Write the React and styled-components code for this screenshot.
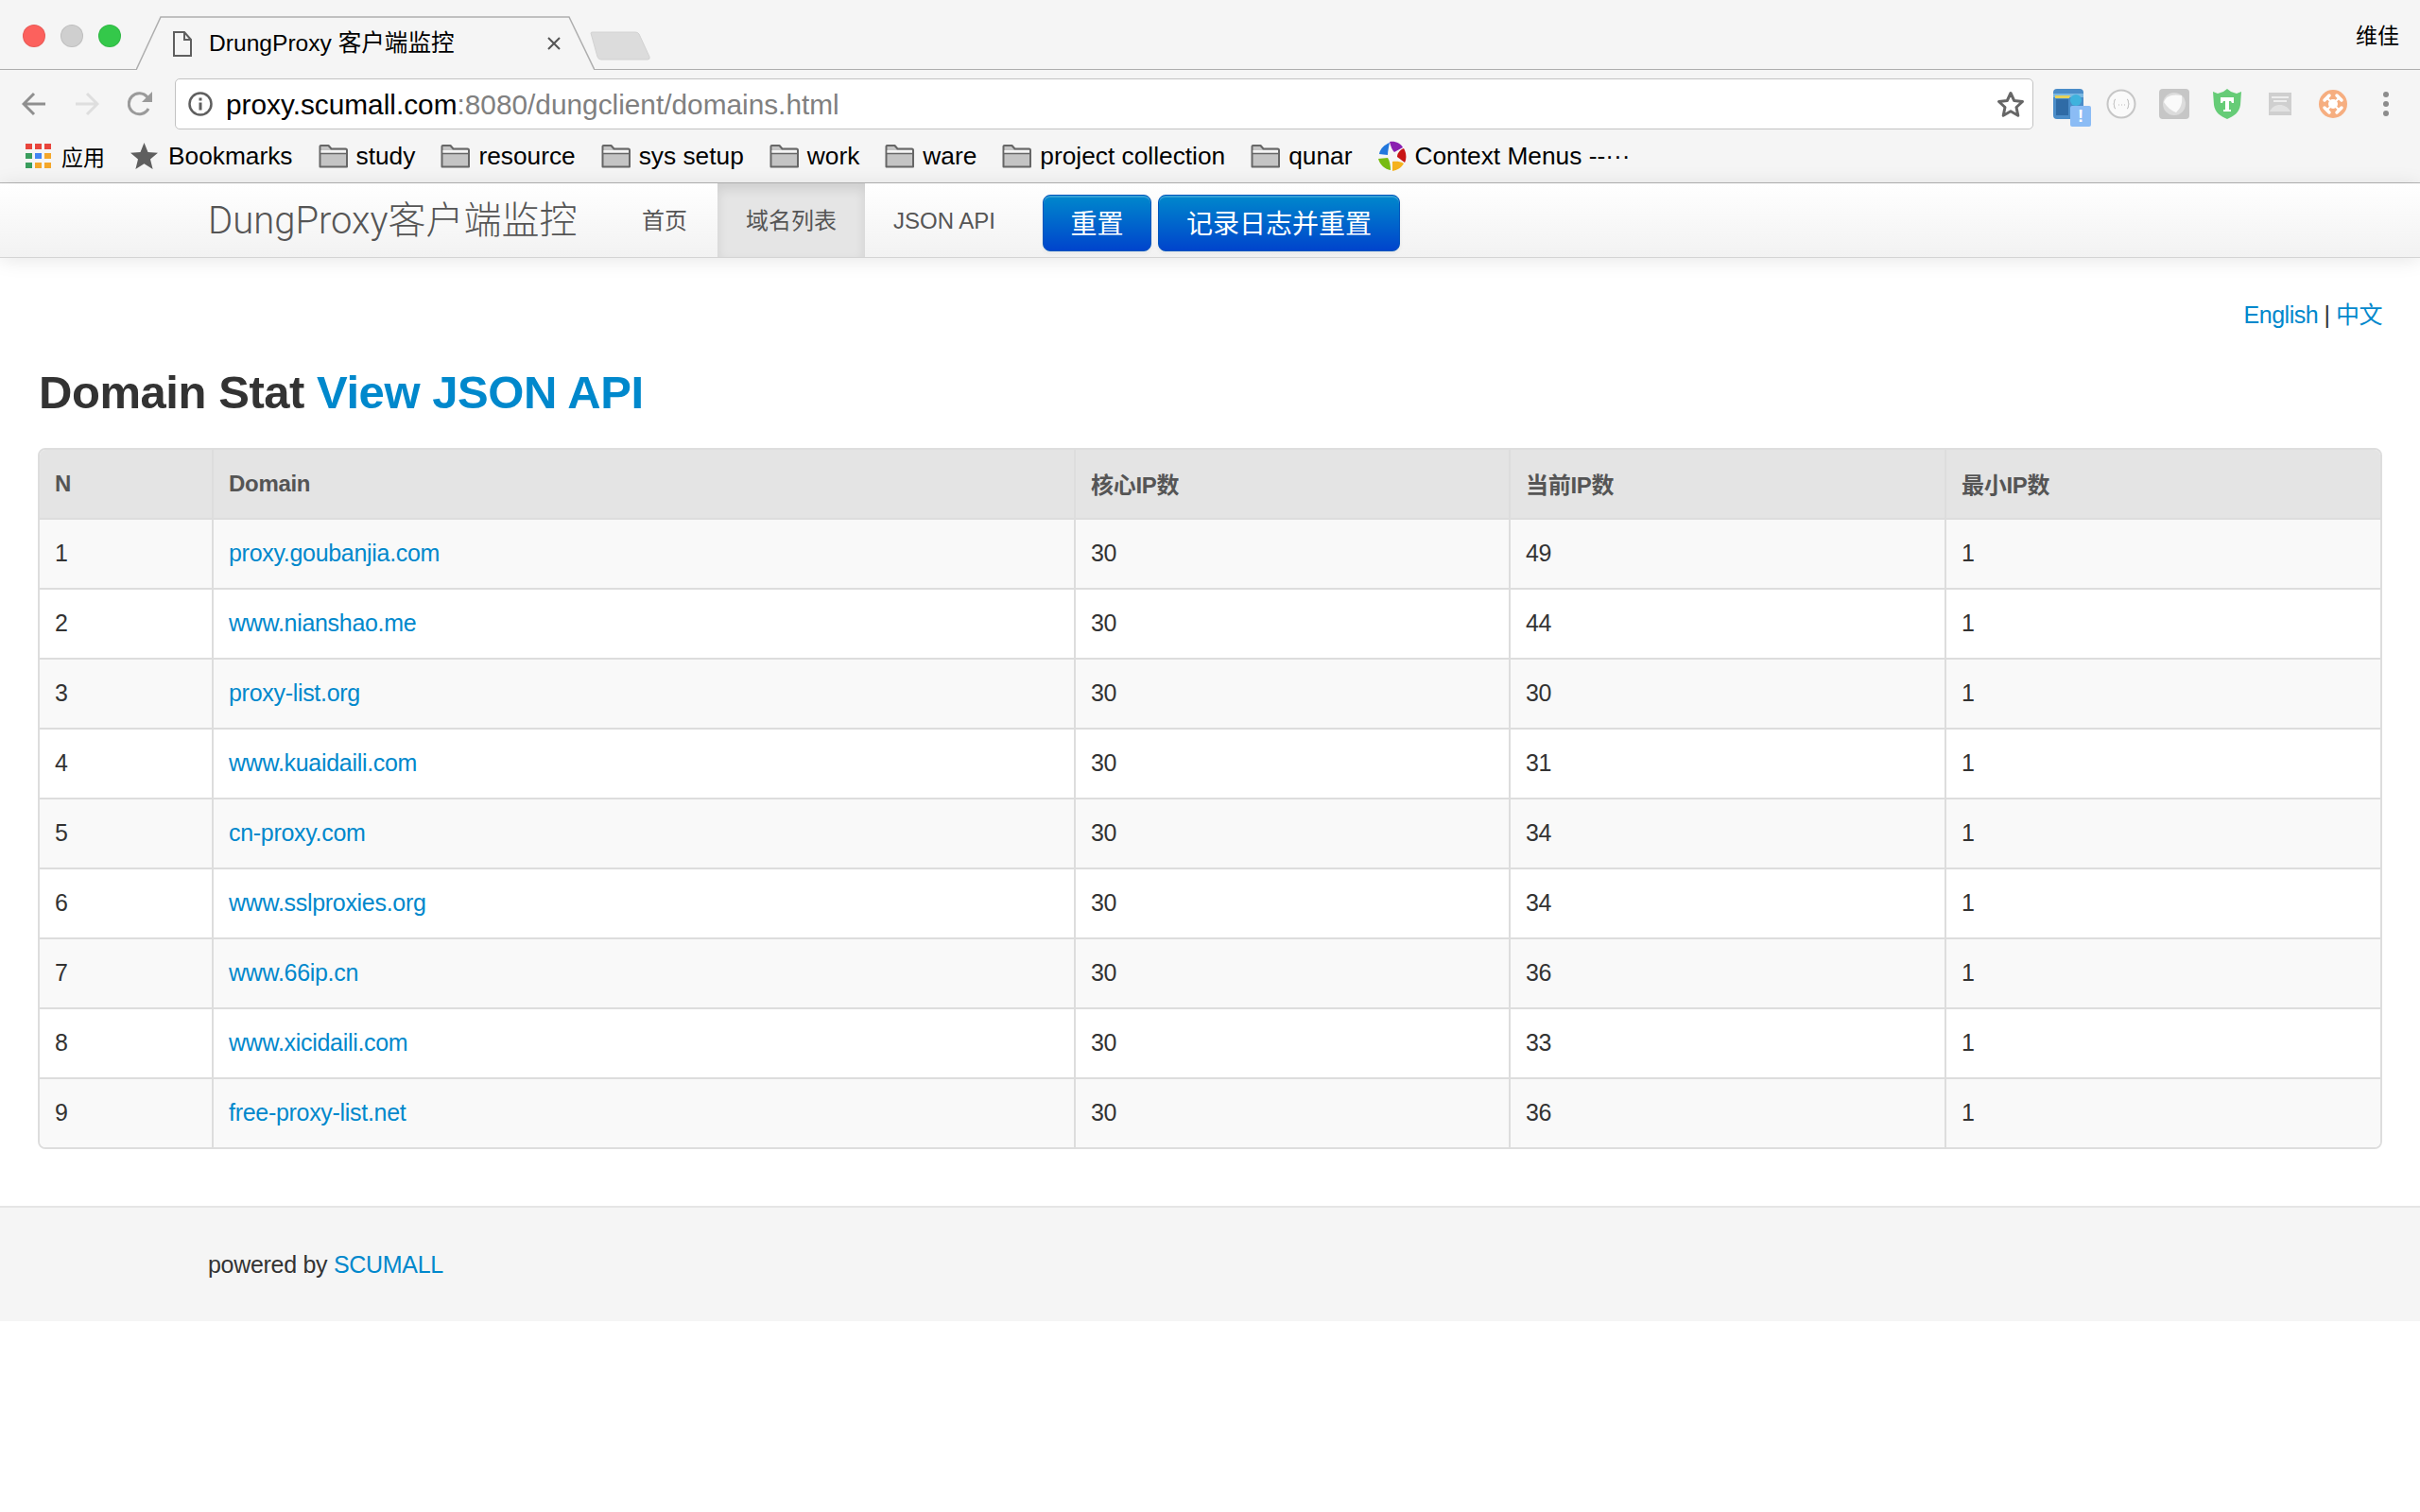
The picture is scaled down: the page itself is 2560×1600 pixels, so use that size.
import styled, { createGlobalStyle } from 'styled-components'

const SANS = `"Liberation Sans", "Noto Sans CJK SC", sans-serif`
const BLUE = '#0088cc'

const GlobalStyle = createGlobalStyle`
  html, body {
    margin: 0;
    background: #fff;
    font-family: ${SANS};
    color: #333;
  }
  * { box-sizing: border-box; }
  a { color: ${BLUE}; text-decoration: none; }
`

const TitleBar = styled.div`
  height: 74px;
  display: flex;
  background: #f5f5f5;
  border-bottom: 1px solid #aeaeae;
  padding-left: 24px;
`

const Lights = styled.div`
  display: flex;
  gap: 16px;
  margin-top: 26px;
`

const Light = styled.span`
  width: 24px;
  height: 24px;
  border-radius: 50%;
  background: ${({ color }) => color};
  border: 1px solid rgba(0, 0, 0, 0.08);
`

const Tab = styled.div`
  position: relative;
  width: 485px;
  height: 57px;
  margin: 17px 0 -1px 16px;
  padding: 16px 36px 0 39px;
  display: flex;
  align-items: flex-start;
`

const TabShape = styled.svg`
  position: absolute;
  left: 0;
  top: 0;
`

const TabTitle = styled.span`
  position: relative;
  margin: -2px 0 0 18px;
  font-size: 24.6px;
  line-height: 30px;
  color: #000;
  flex: 1;
`

const TabClose = styled.svg`
  position: relative;
  margin-top: 6px;
`

const NewTab = styled.svg`
  margin: 33px 0 0 -7px;
`

const Profile = styled.div`
  margin-left: auto;
  padding: 22px 22px 0 0;
  font-size: 23px;
  line-height: 32px;
  color: #000;
`

const Toolbar = styled.div`
  height: 63px;
  padding: 9px 8px 0 23px;
  display: flex;
  align-items: flex-start;
  background: #f5f5f5;
`

const NavIcon = styled.svg`
  margin: 14px 30px 0 0;
  flex: none;
`

const Omnibox = styled.div`
  width: 1966px;
  height: 54px;
  margin-left: -7px;
  padding: 0 8px 0 13px;
  display: flex;
  align-items: center;
  gap: 14px;
  background: #fff;
  border: 1px solid #c2c2c2;
  border-radius: 5px;
`

const Url = styled.div`
  flex: 1;
  padding-top: 2px;
  font-size: 29.8px;
  color: #000;
  span { color: #808080; }
`

const Extensions = styled.div`
  display: flex;
  margin-left: 9px;
  height: 54px;
  align-items: center;
`

const ExtSlot = styled.div`
  position: relative;
  width: 56px;
  display: flex;
  justify-content: center;
  align-items: center;
`

const ExtBadge = styled.span`
  position: absolute;
  left: 30px;
  top: 18px;
  width: 22px;
  height: 22px;
  border-radius: 2px;
  background: #8bbcf5;
  color: #fff;
  font-size: 18px;
  font-weight: bold;
  line-height: 22px;
  text-align: center;
`

const BookmarksBar = styled.div`
  height: 57px;
  padding-left: 27px;
  display: flex;
  align-items: center;
  gap: 27px;
  background: #f5f5f5;
  border-bottom: 1px solid #b4b4b4;
`

const Bookmark = styled.div`
  display: flex;
  align-items: center;
  gap: ${({ gap }) => gap || 9}px;
  font-size: ${({ size }) => size || 26.3}px;
  color: #000;
  white-space: nowrap;
`

const Navbar = styled.nav`
  position: relative;
  height: 79px;
  padding-left: 220px;
  display: flex;
  background: linear-gradient(#ffffff, #f2f2f2);
  border-bottom: 1px solid #d4d4d4;
  box-shadow: 0 2px 20px rgba(0, 0, 0, 0.1);
`

const Brand = styled.a`
  width: 387px;
  margin-right: 42px;
  font-family: Roboto, "Noto Sans CJK SC", sans-serif;
  font-weight: 300;
  font-size: 40px;
  line-height: 80px;
  color: #555;
  white-space: nowrap;
`

const NavItem = styled.a`
  margin-left: ${({ active }) => (active ? '2px' : '0')};
  padding: 0 30px;
  font-size: 24px;
  line-height: 79px;
  color: #555;
  background: ${({ active }) => (active ? '#e5e5e5' : 'transparent')};
  box-shadow: ${({ active }) => (active ? 'inset 0 6px 12px rgba(0, 0, 0, 0.1)' : 'none')};
`

const ResetButton = styled.button`
  width: ${({ wide }) => (wide ? '256px' : '115px')};
  height: 60px;
  margin: 12px 0 0 ${({ wide }) => (wide ? '7px' : '20px')};
  padding: 0 0 2px;
  font-family: ${SANS};
  font-size: 28px;
  color: #fff;
  background: linear-gradient(#0088cc, #0044cc);
  border: 1px solid #0055bb;
  border-radius: 8px;
  box-shadow: inset 0 2px 0 rgba(255, 255, 255, 0.2), 0 2px 4px rgba(0, 0, 0, 0.05);
`

const Main = styled.main`
  padding: 40px 40px 60px;
`

const LangSwitch = styled.div`
  text-align: right;
  font-size: 25px;
  letter-spacing: -0.5px;
  line-height: 40px;
`

const Heading = styled.h2`
  margin: 32px 0 29px 1px;
  font-size: 49px;
  letter-spacing: -0.45px;
  line-height: 60px;
  font-weight: bold;
  color: #333;
`

const Table = styled.table`
  width: 2480px;
  table-layout: fixed;
  border-collapse: separate;
  border-spacing: 0;
  border: 2px solid #ddd;
  border-radius: 8px;
  font-size: 25px;
  letter-spacing: -0.3px;
  overflow: hidden;
`

const Th = styled.th`
  height: 72px;
  padding: 0 16px 1px;
  text-align: left;
  font-size: 24px;
  font-weight: bold;
  color: #555;
  background: #e4e4e4;
  border-left: ${({ first }) => (first ? 'none' : '2px solid #ddd')};
`

const Row = styled.tr`
  background: ${({ odd }) => (odd ? '#f9f9f9' : '#fff')};
`

const Td = styled.td`
  height: 74px;
  padding: 0 16px 2px;
  color: #333;
  border-top: 2px solid #ddd;
  border-left: ${({ first }) => (first ? 'none' : '2px solid #ddd')};
`

const Footer = styled.footer`
  height: 122px;
  padding-left: 220px;
  font-size: 25px;
  letter-spacing: -0.3px;
  line-height: 120px;
  color: #333;
  background: #f5f5f5;
  border-top: 2px solid #e5e5e5;
`

const DocIcon = () => (
  <svg width="20" height="27" viewBox="0 0 20 27" style={{ position: 'relative', flex: 'none' }}>
    <path d="M1 1h11l7 8v17H1z" fill="none" stroke="#5f5f5f" strokeWidth="2" />
    <path d="M12 1v8h7" fill="none" stroke="#5f5f5f" strokeWidth="2" />
  </svg>
)

const FolderIcon = () => (
  <svg width="31" height="25" viewBox="0 0 31 25">
    <path d="M1.5 23.5V2a1 1 0 0 1 1-1h8l3 3.5h15a1.5 1.5 0 0 1 1.5 1.5v17.500z" fill="#c4c4c4" stroke="#666" strokeWidth="2" strokeLinejoin="round" />
    <path d="M2.500 6h26.500v3H2.500z" fill="#f4f4f4" />
    <path d="M2 9.500h27" stroke="#666" strokeWidth="1.500" />
  </svg>
)

const AppsIcon = () => {
  const cells = ['#e8453c', '#e8453c', '#e8453c', '#3a9d5d', '#4285f4', '#f4a72a', '#3a9d5d', '#f4a72a', '#f4a72a']
  return (
    <svg width="27" height="26" viewBox="0 0 27 26">
      {cells.map((fill, i) => (
        <rect key={i} x={(i % 3) * 10} y={Math.floor(i / 3) * 10} width="7" height="6" fill={fill} />
      ))}
    </svg>
  )
}

const Pinwheel = () => (
  <svg width="32" height="32" viewBox="0 0 32 32">
    <path d="M13 2 C8 4 3 8 2 14 L11 15 C11 11 12 7 13 2z" fill="#2277dd" />
    <path d="M13 1 C19 0 25 3 27 7 L18 12 C16 10 14 6 13 1z" fill="#8a1fb0" />
    <path d="M28 8 C31 13 31 19 29 23 L21 17 C21 14 23 10 28 8z" fill="#c81414" />
    <path d="M28 24 C25 29 21 31 16 32 L16 22 C18 22 23 21 28 24z" fill="#f5b21d" />
    <path d="M14 31 C8 30 3 26 1 19 L11 18 C13 21 14 26 14 31z" fill="#77bb11" />
  </svg>
)

const ExtensionIcons = () => (
  <Extensions>
    <ExtSlot>
      <svg width="32" height="32" viewBox="0 0 32 32">
        <rect width="32" height="32" rx="4" fill="#4a8cc8" />
        <path d="M0 5h32v4H0z" fill="#7ab8e2" />
        <path d="M2 7h16l-1 3H2z" fill="#e6d25a" />
        <path d="M3 11h13v17H3z" fill="#2f6ba6" />
        <circle cx="24" cy="12" r="6" fill="#3fb2dd" />
      </svg>
      <ExtBadge>!</ExtBadge>
    </ExtSlot>
    <ExtSlot>
      <svg width="32" height="32" viewBox="0 0 32 32">
        <circle cx="16" cy="16" r="14.500" fill="#fafafa" stroke="#c6c6c6" strokeWidth="2" />
        <path d="M10 11c-2 0-1 4-2 5 1 1 0 5 2 5M22 11c2 0 1 4 2 5-1 1 0 5-2 5" fill="none" stroke="#bbb" />
        <path d="M13 17h1M16 17h1M19 17h1" stroke="#bbb" />
      </svg>
    </ExtSlot>
    <ExtSlot>
      <svg width="32" height="32" viewBox="0 0 32 32">
        <rect width="32" height="32" rx="4" fill="#c6c6c6" />
        <circle cx="16" cy="16" r="12" fill="#dcdcdc" />
        <path d="M5 14c2-6 8-9 19-7 1 8-1 13-6 18-5-2-10-6-13-11z" fill="#fafafa" />
      </svg>
    </ExtSlot>
    <ExtSlot>
      <svg width="30" height="32" viewBox="0 0 30 32">
        <path d="M0 3l5 2 6-2 4-3 4 3 6 2 5-2-1 14c-1 8-7 12-14 15C8 29 2 25 1 17z" fill="#66cc77" />
        <path d="M8 9h14v6h-2l-1-2h-2v9h2v2h-8v-2h2v-9h-2l-1 2H8z" fill="#fff" />
      </svg>
    </ExtSlot>
    <ExtSlot>
      <svg width="24" height="24" viewBox="0 0 24 24">
        <rect width="24" height="24" fill="#cfcfcf" />
        <path d="M3 5h18M5 9h14" stroke="#eee" strokeWidth="2" />
        <path d="M1 20c3-6 7-7 11-7s8 2 11 7z" fill="#e2e2e2" />
      </svg>
    </ExtSlot>
    <ExtSlot>
      <svg width="30" height="30" viewBox="0 0 30 30">
        <circle cx="15" cy="15" r="15" fill="#f6ae80" />
        <path d="M8 8l14 14M22 8L8 22" stroke="#fff" strokeWidth="2" />
        <circle cx="15" cy="15" r="5" fill="#fff" />
        <path d="M6 11l5-5M19 24l5-5M19 6l5 5M6 19l5 5" stroke="#fff" strokeWidth="3.500" strokeLinecap="round" />
      </svg>
    </ExtSlot>
    <ExtSlot>
      <svg width="8" height="28" viewBox="0 0 8 28">
        <circle cx="4" cy="4" r="3" fill="#8c8c8c" />
        <circle cx="4" cy="14" r="3" fill="#8c8c8c" />
        <circle cx="4" cy="24" r="3" fill="#8c8c8c" />
      </svg>
    </ExtSlot>
  </Extensions>
)

const BrowserChrome = () => (
  <>
    <TitleBar>
      <Lights>
        <Light color="#fc615d" />
        <Light color="#cfcfcf" />
        <Light color="#34c84a" />
      </Lights>
      <Tab>
        <TabShape width="485" height="57" viewBox="0 0 485 57">
          <path d="M0 57 L26 1 H458 L485 57" fill="#f5f5f5" stroke="#aeaeae" strokeWidth="1.500" />
        </TabShape>
        <DocIcon />
        <TabTitle>DrungProxy 客户端监控</TabTitle>
        <TabClose width="14" height="14" viewBox="0 0 14 14">
          <path d="M1 1l12 12M13 1L1 13" stroke="#555" strokeWidth="2" />
        </TabClose>
      </Tab>
      <NewTab width="66" height="31" viewBox="0 0 66 31">
        <path d="M3 2 Q3 1 5 1 H50 Q53 1 54 3 L65 27 Q66 30 63 30 H14 Q11 30 10 27z" fill="#dcdcdc" stroke="#d2d2d2" />
      </NewTab>
      <Profile>维佳</Profile>
    </TitleBar>
    <Toolbar>
      <NavIcon width="26" height="26" viewBox="0 0 26 26">
        <path d="M25 13H3M13 2L2 13l11 11" fill="none" stroke="#8f8f8f" strokeWidth="3" />
      </NavIcon>
      <NavIcon width="26" height="26" viewBox="0 0 26 26">
        <path d="M1 13h22M13 2l11 11-11 11" fill="none" stroke="#dedede" strokeWidth="3" />
      </NavIcon>
      <NavIcon width="27" height="26" viewBox="0 0 27 26">
        <path d="M22 18a11 11 0 1 1-1-12" fill="none" stroke="#9a9a9a" strokeWidth="3" />
        <path d="M26 0v11H15z" fill="#9a9a9a" />
      </NavIcon>
      <Omnibox>
        <svg width="26" height="26" viewBox="0 0 26 26">
          <circle cx="13" cy="13" r="11.500" fill="none" stroke="#5f5f5f" strokeWidth="2.500" />
          <path d="M13 11.500v8M13 6.500v3" stroke="#5f5f5f" strokeWidth="3" />
        </svg>
        <Url>proxy.scumall.com<span>:8080/dungclient/domains.html</span></Url>
        <svg width="30" height="29" viewBox="0 0 30 29">
          <path d="M15 2.500l3.700 8 8.800 1-6.500 6 1.800 8.700L15 21.800l-7.800 4.400L9 17.500l-6.500-6 8.800-1z" fill="none" stroke="#666" strokeWidth="3" strokeLinejoin="round" />
        </svg>
      </Omnibox>
      <ExtensionIcons />
    </Toolbar>
    <BookmarksBar>
      <Bookmark gap={11} size={23}><AppsIcon />应用</Bookmark>
      <Bookmark gap={11}>
        <svg width="29" height="28" viewBox="0 0 29 28">
          <path d="M14.500 0l4 10 10.500.7-8 6.800 2.600 10.500-9.100-5.800L5.400 28 8 17.500 0 10.700 10.500 10z" fill="#5f5f5f" />
        </svg>
        Bookmarks
      </Bookmark>
      {['study', 'resource', 'sys setup', 'work', 'ware', 'project collection', 'qunar'].map((name) => (
        <Bookmark key={name}><FolderIcon />{name}</Bookmark>
      ))}
      <Bookmark gap={7}><Pinwheel />Context Menus --···</Bookmark>
    </BookmarksBar>
  </>
)

const rows = [
  ['proxy.goubanjia.com', 49],
  ['www.nianshao.me', 44],
  ['proxy-list.org', 30],
  ['www.kuaidaili.com', 31],
  ['cn-proxy.com', 34],
  ['www.sslproxies.org', 34],
  ['www.66ip.cn', 36],
  ['www.xicidaili.com', 33],
  ['free-proxy-list.net', 36],
]

const App = () => (
  <>
    <GlobalStyle />
    <BrowserChrome />
    <Navbar>
      <Brand>DungProxy客户端监控</Brand>
      <NavItem>首页</NavItem>
      <NavItem active>域名列表</NavItem>
      <NavItem>JSON API</NavItem>
      <ResetButton>重置</ResetButton>
      <ResetButton wide>记录日志并重置</ResetButton>
    </Navbar>
    <Main>
      <LangSwitch><a>English</a> | <a>中文</a></LangSwitch>
      <Heading>Domain Stat <a>View JSON API</a></Heading>
      <Table>
        <colgroup>
          <col width="182" />
          <col width="912" />
          <col width="460" />
          <col width="461" />
          <col width="461" />
        </colgroup>
        <thead>
          <tr>
            <Th first>N</Th>
            <Th>Domain</Th>
            <Th>核心IP数</Th>
            <Th>当前IP数</Th>
            <Th>最小IP数</Th>
          </tr>
        </thead>
        <tbody>
          {rows.map(([domain, current], i) => (
            <Row key={domain} odd={i % 2 === 0}>
              <Td first>{i + 1}</Td>
              <Td><a>{domain}</a></Td>
              <Td>30</Td>
              <Td>{current}</Td>
              <Td>1</Td>
            </Row>
          ))}
        </tbody>
      </Table>
    </Main>
    <Footer>powered by <a>SCUMALL</a></Footer>
  </>
)

export default App
